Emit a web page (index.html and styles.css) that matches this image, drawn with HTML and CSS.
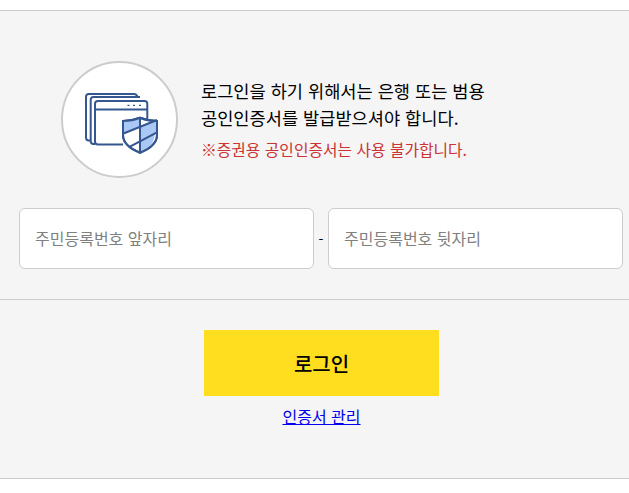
FILE: index.html
```html
<!DOCTYPE html>
<html lang="ko">
<head>
    <meta charset="UTF-8">
    <meta name="viewport" content="width=device-width, initial-scale=1.0">
    <title>로그인</title>
    <link rel="stylesheet" href="styles.css">
</head>
<body>
    <main class="login-box">
        <section class="info">
            <div class="cert-icon">
                <svg width="73" height="61" viewBox="0 0 73 61" fill="none" stroke="#35578f" stroke-width="2">
                    <path d="M5.7 47.5 H3.8 Q1 47.5 1 44.5 V3.8 Q1 1 3.8 1 H49 Q51.5 1 52.5 3.8"/>
                    <path d="M10 51 H8.5 Q5.7 51 5.7 48 V6.8 Q5.7 4 8.5 4 H55"/>
                    <path d="M38 51.5 H13 Q10 51.5 10 48.5 V10.8 Q10 8 13 8 H59.5 Q62.3 8 62.3 10.8 V26"/>
                    <path d="M10 16.5 H62.3"/>
                    <path d="M42.5 12.4 H44.5 M48 12.4 H50 M54 12.4 H56" stroke-width="1.4"/>
                    <path d="M38 28 Q47 28 55 24.8 Q63 28 72 28 V42 Q72 53 55 59.7 Q38 53 38 42 Z" fill="#fff"/>
                    <path d="M38 28 Q47 28 55 24.8 V33 L39 40.5 Z" fill="#a9c8f5" stroke="none"/>
                    <path d="M72 27 V39.5 L55 47 V33 Z" fill="#a9c8f5" stroke="none"/>
                    <path d="M55 47 V59.7 Q64 56 68 49 L70 42 V39.5 Z" fill="#a9c8f5" stroke="none"/>
                    <path d="M38 28 Q47 28 55 24.8 Q63 28 72 28 V42 Q72 53 55 59.7 Q38 53 38 42 Z"/>
                    <path d="M55 24.8 V59.7 M38.5 40.5 L72 27 M44.5 53.8 L71.5 39.7"/>
                </svg>
            </div>
            <div class="info-text">
                <p>로그인을 하기 위해서는 은행 또는 범용<br>공인인증서를 발급받으셔야 합니다.</p>
                <p class="warn">※증권용 공인인증서는 사용 불가합니다.</p>
            </div>
        </section>
        <form class="id-row">
            <input type="text" placeholder="주민등록번호 앞자리">
            <span class="dash">-</span>
            <input type="text" placeholder="주민등록번호 뒷자리">
        </form>
        <section class="actions">
            <button type="button" class="btn-login">로그인</button>
            <a href="#" class="cert-link">인증서 관리</a>
        </section>
    </main>
</body>
</html>
```

FILE: styles.css
```css
body {
    margin: 0;
    padding: 10px 0 0;
    background-color: #fff;
    font-family: "Noto Sans CJK KR", "Liberation Sans", sans-serif;
    color: #000;
}
.login-box {
    height: 469px;
    box-sizing: border-box;
    border-top: 1px solid #ccc;
    border-bottom: 1px solid #ccc;
    background-color: #f5f5f5;
}
.info {
    display: flex;
    align-items: center;
    padding: 50px 0 0 61px;
}
.cert-icon {
    display: flex;
    align-items: center;
    justify-content: center;
    flex: none;
    width: 117px;
    height: 117px;
    padding: 8px 0 0 4px;
    box-sizing: border-box;
    border: 2px solid #ccc;
    border-radius: 50%;
    background-color: #fff;
}
.info-text {
    margin-left: 23px;
    padding-bottom: 2px;
}
.info-text p {
    margin: 0;
    font-size: 17.6px;
    line-height: 27px;
}
.info-text .warn {
    margin-top: 9px;
    font-size: 15.8px;
    line-height: 20px;
    color: #c33;
}
.id-row {
    display: flex;
    align-items: center;
    padding: 30px 6px 30px 19px;
    border-bottom: 1px solid #ccc;
}
.id-row input {
    flex: 1;
    min-width: 0;
    height: 61px;
    padding: 0 16px 2px 15px;
    box-sizing: border-box;
    border: 1px solid #ccc;
    border-radius: 6px;
    background: #fff;
    font-family: inherit;
    font-size: 16px;
}
.id-row input::placeholder {
    color: #808080;
}
.dash {
    width: 14px;
    text-align: center;
    font-size: 14px;
}
.actions {
    display: flex;
    flex-direction: column;
    align-items: center;
    padding: 30px 0 0 14px;
}
.btn-login {
    width: 235px;
    height: 66px;
    border: none;
    background-color: #ffde20;
    color: #000;
    font-family: inherit;
    font-size: 20px;
    font-weight: 500;
}
.cert-link {
    margin-top: 9px;
    font-size: 16px;
    line-height: 22px;
    color: #00e;
}
```
